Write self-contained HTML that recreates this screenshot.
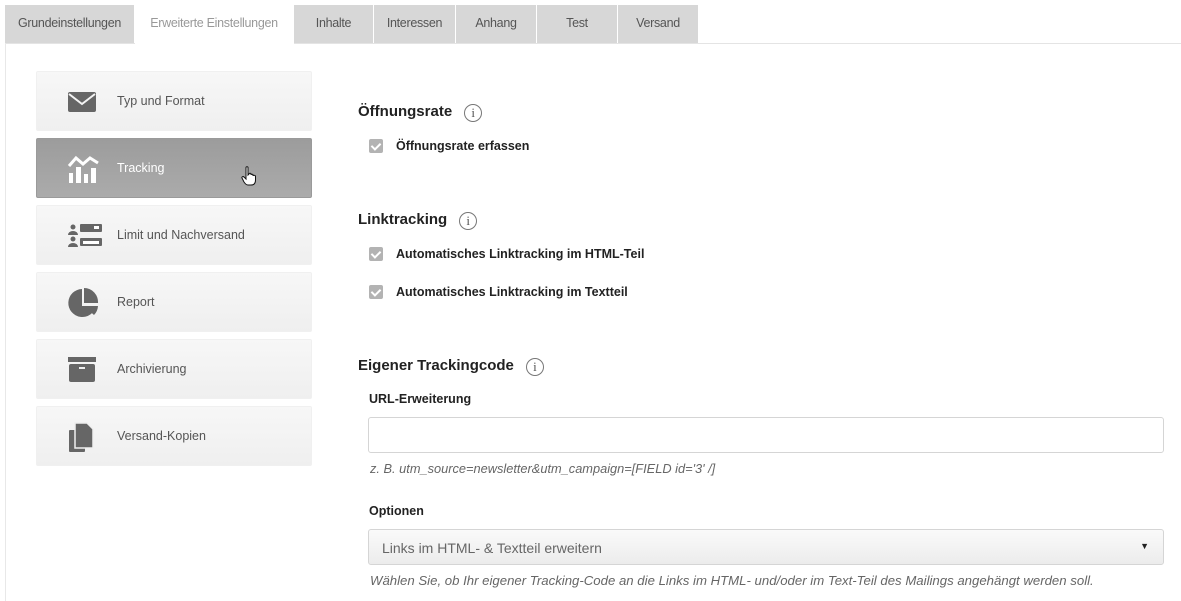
<!DOCTYPE html>
<html><head><meta charset="utf-8"><style>
*{box-sizing:border-box;margin:0;padding:0}
body{width:1181px;height:601px;background:#fff;font-family:"Liberation Sans",sans-serif;color:#222;position:relative;overflow:hidden}
.tab{position:absolute;top:5px;height:38px;background:#d7d7d7;border-right:1px solid #fff;font-size:12.5px;color:#555;text-align:center;line-height:36px;letter-spacing:-0.3px}
.tab.act{background:#fff;color:#999}
.abs{position:absolute}
.item{position:absolute;left:36px;width:276px;height:60px;background:linear-gradient(#f7f7f7,#efefef);border:1px solid #f0f0f0;border-radius:2px}
.item .t{position:absolute;left:80px;top:22px;font-size:12.5px;color:#555}
.item svg{position:absolute;left:30px;top:15px}
.item.act{background:linear-gradient(#9c9c9c,#ababab);border-color:#9a9a9a}
.item.act .t{color:#fff}
h3{position:absolute;left:358px;font-size:15px;font-weight:bold;color:#222}
.info{display:inline-block;width:18px;height:18px;border:1px solid #777;border-radius:50%;font:13px "Liberation Serif",serif;color:#555;text-align:center;line-height:16px;margin-left:12px;vertical-align:-1px;font-weight:normal}
.cb{position:absolute;left:369px;width:14px;height:14px;background:#b3b3b3;border-radius:2px}
.cb::after{content:"";position:absolute;left:4px;top:1.5px;width:4px;height:7px;border:solid #fff;border-width:0 2px 2px 0;transform:rotate(45deg)}
.lbl{position:absolute;left:396px;font-size:12.5px;font-weight:bold;color:#222}
.hint{position:absolute;left:370px;font-size:12.8px;font-style:italic;color:#666}
</style></head><body>
<div class="abs" style="left:5px;top:43px;width:1176px;height:1px;background:#e4e4e4"></div>
<div class="abs" style="left:5px;top:43px;width:1px;height:558px;background:#e8e8e8"></div>
<div class="tab" style="left:5px;width:130px">Grundeinstellungen</div>
<div class="tab act" style="left:135px;width:159px;height:39px">Erweiterte Einstellungen</div>
<div class="tab" style="left:294px;width:80px">Inhalte</div>
<div class="tab" style="left:374px;width:82px">Interessen</div>
<div class="tab" style="left:456px;width:81px">Anhang</div>
<div class="tab" style="left:537px;width:81px">Test</div>
<div class="tab" style="left:618px;width:81px">Versand</div>

<div class="item" style="top:71px"><svg width="30" height="30" viewBox="0 0 30 30"><rect x="1" y="5" width="28" height="20" rx="2" fill="#666"/><path d="M2 7 L15 17 L28 7" stroke="#f3f3f3" stroke-width="2" fill="none"/></svg><div class="t">Typ und Format</div></div>
<div class="item act" style="top:138px"><svg width="34" height="32" viewBox="0 0 34 32"><path d="M2 12 L9 4 L16 10 L23 4 L31 9" stroke="#fff" stroke-width="3" fill="none"/><rect x="2" y="19" width="4" height="10" fill="#fff"/><rect x="9" y="13" width="5" height="16" fill="#fff"/><rect x="17" y="20" width="4" height="9" fill="#fff"/><rect x="24" y="14" width="5" height="15" fill="#fff"/></svg><div class="t">Tracking</div>
<svg style="left:204px;top:27px" width="16" height="20" viewBox="0 0 16 20"><path d="M5 1.5 C5 0.5 7 0.5 7 1.5 L7 9 L8 8 C8 7 10 7 10 8 L10 9 C10 8 12 8 12 9 L12 10 C12 9 14.5 9 14.5 10.5 L14.5 14 C14.5 17 13 19 10 19 L7 19 C5 19 4 17.5 3 16 L1 12 C0.5 11 2 10 3 11 L5 13 Z" fill="#fff" stroke="#111" stroke-width="1"/></svg></div>
<div class="item" style="top:205px"><svg width="36" height="30" viewBox="0 0 36 30"><circle cx="6" cy="6" r="2.5" fill="#666"/><path d="M1 14 a5 4 0 0 1 10 0 z" fill="#666"/><rect x="13" y="3" width="22" height="8" rx="1" fill="#666"/><rect x="27" y="5" width="5" height="3" fill="#fff"/><circle cx="6" cy="18" r="2.5" fill="#666"/><path d="M1 26 a5 4 0 0 1 10 0 z" fill="#666"/><rect x="13" y="17" width="22" height="8" rx="1" fill="#666"/><rect x="16" y="20" width="16" height="3" fill="#fff"/></svg><div class="t">Limit und Nachversand</div></div>
<div class="item" style="top:272px"><svg width="32" height="32" viewBox="0 0 32 32"><path d="M15 1 A14 14 0 1 0 29 18 L15 18 Z" fill="#666"/><path d="M17 0 L17 15 L31 15 A14 14 0 0 0 17 0Z" fill="#666"/><path d="M17 18 L31 18 A14 14 0 0 1 27 27 Z" fill="#666"/></svg><div class="t">Report</div></div>
<div class="item" style="top:339px"><svg width="30" height="30" viewBox="0 0 30 30"><rect x="1" y="2" width="28" height="5" fill="#666"/><rect x="2" y="9" width="26" height="18" rx="2" fill="#666"/><rect x="12" y="12" width="6" height="2" fill="#eee"/></svg><div class="t">Archivierung</div></div>
<div class="item" style="top:406px"><svg width="30" height="32" viewBox="0 0 30 32"><rect x="2" y="8" width="16" height="22" rx="1" fill="#666"/><path d="M8 1 L20 1 L26 7 L26 26 L8 26 Z" fill="#666" stroke="#efefef" stroke-width="1.5"/></svg><div class="t">Versand-Kopien</div></div>

<h3 style="top:103px">Öffnungsrate<span class="info">i</span></h3>
<div class="cb" style="top:139px"></div><div class="lbl" style="top:139px">Öffnungsrate erfassen</div>
<h3 style="top:211px">Linktracking<span class="info">i</span></h3>
<div class="cb" style="top:247px"></div><div class="lbl" style="top:247px">Automatisches Linktracking im HTML-Teil</div>
<div class="cb" style="top:285px"></div><div class="lbl" style="top:285px">Automatisches Linktracking im Textteil</div>
<h3 style="top:357px">Eigener Trackingcode<span class="info">i</span></h3>
<div class="abs" style="left:369px;top:392px;font-size:12.5px;font-weight:bold">URL-Erweiterung</div>
<div class="abs" style="left:368px;top:417px;width:796px;height:36px;border:1px solid #d5d5d5;border-radius:3px"></div>
<div class="hint" style="top:461px">z. B. utm_source=newsletter&amp;utm_campaign=[FIELD id='3' /]</div>
<div class="abs" style="left:369px;top:504px;font-size:12.5px;font-weight:bold">Optionen</div>
<div class="abs" style="left:368px;top:529px;width:796px;height:36px;border:1px solid #d5d5d5;border-radius:3px;background:linear-gradient(#fafafa,#ececec);font-size:14px;color:#666;padding:10px 0 0 13px">Links im HTML- &amp; Textteil erweitern<span style="position:absolute;right:14px;top:11px;font-size:9px;color:#222">▼</span></div>
<div class="hint" style="top:573px;font-size:13.2px">Wählen Sie, ob Ihr eigener Tracking-Code an die Links im HTML- und/oder im Text-Teil des Mailings angehängt werden soll.</div>
</body></html>
